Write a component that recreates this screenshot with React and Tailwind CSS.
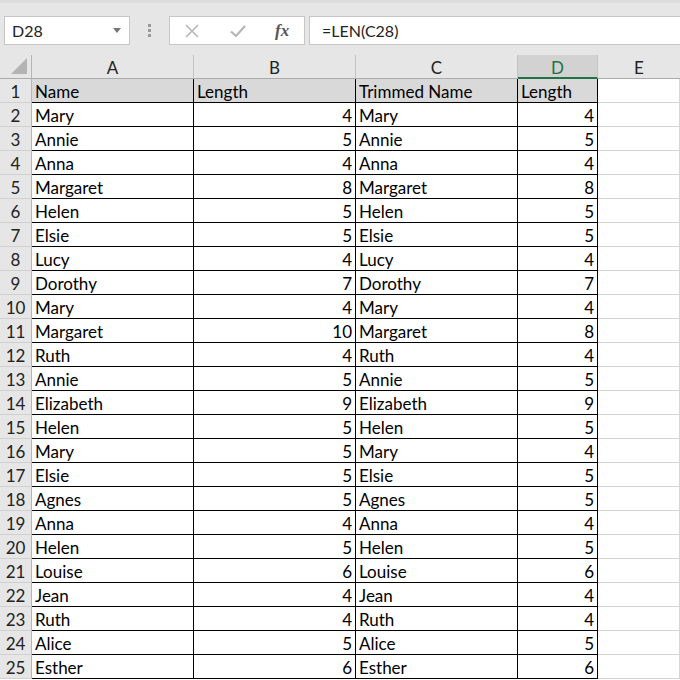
import React from 'react';

const rows = [
  ['Mary', 4, 'Mary', 4],
  ['Annie', 5, 'Annie', 5],
  ['Anna', 4, 'Anna', 4],
  ['Margaret', 8, 'Margaret', 8],
  ['Helen', 5, 'Helen', 5],
  ['Elsie', 5, 'Elsie', 5],
  ['Lucy', 4, 'Lucy', 4],
  ['Dorothy', 7, 'Dorothy', 7],
  ['Mary', 4, 'Mary', 4],
  ['Margaret', 10, 'Margaret', 8],
  ['Ruth', 4, 'Ruth', 4],
  ['Annie', 5, 'Annie', 5],
  ['Elizabeth', 9, 'Elizabeth', 9],
  ['Helen', 5, 'Helen', 5],
  ['Mary', 5, 'Mary', 4],
  ['Elsie', 5, 'Elsie', 5],
  ['Agnes', 5, 'Agnes', 5],
  ['Anna', 4, 'Anna', 4],
  ['Helen', 5, 'Helen', 5],
  ['Louise', 6, 'Louise', 6],
  ['Jean', 4, 'Jean', 4],
  ['Ruth', 4, 'Ruth', 4],
  ['Alice', 5, 'Alice', 5],
  ['Esther', 6, 'Esther', 6],
];

const cols = 'grid grid-cols-[32px_162px_162px_162px_80px_1fr]';
const rowHead = 'h-[24px] pt-[2px] flex items-center justify-center bg-[#e6e6e6] border-r border-b border-r-[#b5b5b5] border-b-[#d0d0d0] text-[#222]';
const cell = 'h-[24px] pt-[2px] flex items-center border-r border-b border-black';
const empty = 'h-[24px] border-r border-b border-[#d4d4d4]';

const FormulaBar = () => (
  <div className="h-[55px] bg-[#e6e6e6] flex items-start pt-[13px] pl-[4px] border-t-[3px] border-[#dcdcdc]">
    <div className="w-[126px] h-[29px] bg-white border border-[#c6c6c6] flex items-center justify-between pl-[7px] pr-[8px]">
      <span className="text-[16px] text-[#222]">D28</span>
      <svg width="8" height="5" viewBox="0 0 8 5"><path d="M0 0h8L4 5z" fill="#777" /></svg>
    </div>
    <div className="w-[39px] h-[29px] flex flex-col items-center justify-center gap-[2px]">
      <span className="w-[3px] h-[3px] bg-[#999]" />
      <span className="w-[3px] h-[3px] bg-[#999]" />
      <span className="w-[3px] h-[3px] bg-[#999]" />
    </div>
    <div className="w-[136px] h-[29px] bg-white border border-[#c6c6c6] flex items-center">
      <svg className="ml-[14px]" width="16" height="16" viewBox="0 0 16 16">
        <path d="M2 2L14 14M14 2L2 14" stroke="#b5b5b5" strokeWidth="1.6" />
      </svg>
      <svg className="ml-[30px]" width="16" height="14" viewBox="0 0 16 14">
        <path d="M1 7.5L6 12L15 2" stroke="#b5b5b5" strokeWidth="2.2" fill="none" />
      </svg>
      <span className="ml-[29px] italic text-[17px] text-[#555] font-['Liberation_Serif',serif] font-bold">fx</span>
    </div>
    <div className="ml-[4px] flex-1 h-[29px] bg-white border border-r-0 border-[#c6c6c6] flex items-center pl-[12px]">
      <span className="text-[16px] text-[#222]">=LEN(C28)</span>
    </div>
  </div>
);

const ColumnHeaders = () => (
  <div className={cols}>
    <div className="h-[24px] bg-[#e6e6e6] border-r border-b border-r-[#b5b5b5] border-b-[#ababab] relative">
      <svg className="absolute right-[4px] bottom-[4px]" width="16" height="16" viewBox="0 0 16 16">
        <path d="M16 0V16H0z" fill="#b4b4b4" />
      </svg>
    </div>
    {['A', 'B', 'C'].map((c) => (
      <div key={c} className="h-[24px] pt-[2px] flex items-center justify-center bg-[#e6e6e6] border-r border-b border-r-[#c3c3c3] border-b-[#ababab] text-[#222]">
        {c}
      </div>
    ))}
    <div className="h-[24px] pt-[2px] flex items-center justify-center bg-[#d2d2d2] border-r border-r-[#c3c3c3] border-b-2 border-b-[#217346] text-[#217346]">
      D
    </div>
    <div className="h-[24px] pt-[2px] flex items-center justify-center bg-[#e6e6e6] border-b border-b-[#ababab] text-[#222]">
      E
    </div>
  </div>
);

export default function App() {
  return (
    <div className="w-[680px] h-[680px] overflow-hidden bg-white font-['Lato','Liberation_Sans',sans-serif] text-[17px] leading-none text-black">
      <FormulaBar />
      <ColumnHeaders />
      <div className={cols}>
        <div className={rowHead}>1</div>
        <div className={`${cell} bg-[#d9d9d9] pl-[3px]`}>Name</div>
        <div className={`${cell} bg-[#d9d9d9] pl-[3px]`}>Length</div>
        <div className={`${cell} bg-[#d9d9d9] pl-[3px]`}>Trimmed Name</div>
        <div className={`${cell} bg-[#d9d9d9] pl-[3px]`}>Length</div>
        <div className={empty} />
        {rows.map((r, i) => (
          <React.Fragment key={i}>
            <div className={rowHead}>{i + 2}</div>
            <div className={`${cell} pl-[3px]`}>{r[0]}</div>
            <div className={`${cell} justify-end pr-[3px]`}>{r[1]}</div>
            <div className={`${cell} pl-[3px]`}>{r[2]}</div>
            <div className={`${cell} justify-end pr-[3px]`}>{r[3]}</div>
            <div className={empty} />
          </React.Fragment>
        ))}
      </div>
    </div>
  );
}
